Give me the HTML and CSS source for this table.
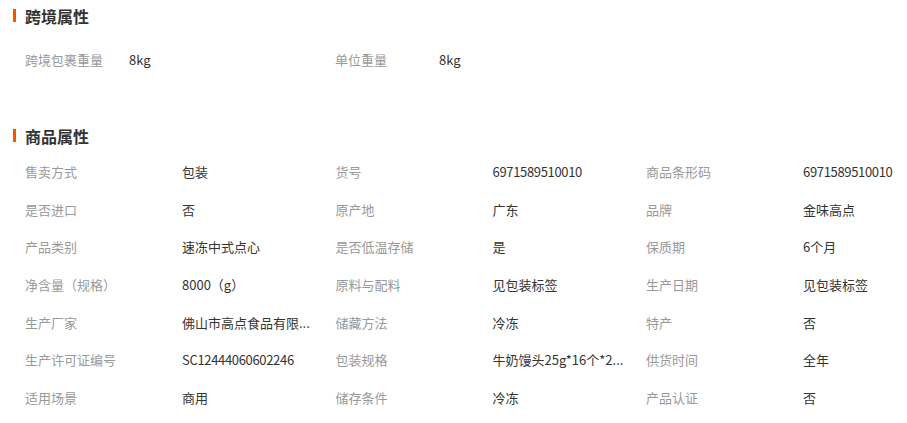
FILE: index.html
```html
<!DOCTYPE html>
<html lang="zh-CN">
<head>
    <meta charset="UTF-8">
    <meta name="viewport" content="width=device-width, initial-scale=1.0">
    <title>商品属性</title>
    <link rel="stylesheet" href="styles.css">
</head>
<body>
    <div class="section">
        <h2 class="section-title">跨境属性</h2>
        <div class="cross-row">
            <div class="cross-item">
                <span class="cross-label">跨境包裹重量</span>
                <span class="value">8kg</span>
            </div>
            <div class="cross-item">
                <span class="cross-label">单位重量</span>
                <span class="value">8kg</span>
            </div>
        </div>
    </div>

    <div class="section section-goods">
        <h2 class="section-title">商品属性</h2>
        <div class="attr-grid">
            <div class="attr"><span class="label">售卖方式</span><span class="value">包装</span></div>
            <div class="attr"><span class="label">货号</span><span class="value num">6971589510010</span></div>
            <div class="attr"><span class="label">商品条形码</span><span class="value num">6971589510010</span></div>

            <div class="attr"><span class="label">是否进口</span><span class="value">否</span></div>
            <div class="attr"><span class="label">原产地</span><span class="value">广东</span></div>
            <div class="attr"><span class="label">品牌</span><span class="value">金味高点</span></div>

            <div class="attr"><span class="label">产品类别</span><span class="value">速冻中式点心</span></div>
            <div class="attr"><span class="label">是否低温存储</span><span class="value">是</span></div>
            <div class="attr"><span class="label">保质期</span><span class="value">6个月</span></div>

            <div class="attr"><span class="label">净含量（规格）</span><span class="value">8000（g）</span></div>
            <div class="attr"><span class="label">原料与配料</span><span class="value">见包装标签</span></div>
            <div class="attr"><span class="label">生产日期</span><span class="value">见包装标签</span></div>

            <div class="attr"><span class="label">生产厂家</span><span class="value" title="佛山市高点食品有限公司">佛山市高点食品有限...</span></div>
            <div class="attr"><span class="label">储藏方法</span><span class="value">冷冻</span></div>
            <div class="attr"><span class="label">特产</span><span class="value">否</span></div>

            <div class="attr"><span class="label">生产许可证编号</span><span class="value num">SC12444060602246</span></div>
            <div class="attr"><span class="label">包装规格</span><span class="value" title="牛奶馒头25g*16个*20包">牛奶馒头25g*16个*2...</span></div>
            <div class="attr"><span class="label">供货时间</span><span class="value">全年</span></div>

            <div class="attr"><span class="label">适用场景</span><span class="value">商用</span></div>
            <div class="attr"><span class="label">储存条件</span><span class="value">冷冻</span></div>
            <div class="attr"><span class="label">产品认证</span><span class="value">否</span></div>
        </div>
    </div>
</body>
</html>
```

FILE: styles.css
```css
body {
    margin: 0;
    font-family: "Noto Sans CJK SC", "Liberation Sans", sans-serif;
    font-size: 13px;
    color: #333;
    background: #fff;
}
.section-title {
    margin: 0;
    height: 32px;
    line-height: 32px;
    padding-left: 25px;
    position: relative;
    font-size: 16px;
    font-weight: bold;
    color: #333;
}
.section-title::before {
    content: "";
    position: absolute;
    left: 13px;
    top: 9px;
    width: 3px;
    height: 13px;
    background-color: #ff5000;
}
.cross-row {
    display: flex;
    margin-top: 9px;
    padding-left: 25px;
}
.cross-item {
    width: 310px;
    height: 38px;
    line-height: 38px;
    display: flex;
}
.cross-label {
    width: 104px;
    color: #999;
}
.section-goods {
    margin-top: 41px;
}
.attr-grid {
    display: grid;
    grid-template-columns: 310.5px 310.5px 1fr;
    grid-auto-rows: 37.67px;
    margin-top: 1px;
    padding-left: 25px;
}
.attr {
    display: flex;
    line-height: 37.67px;
    white-space: nowrap;
}
.label {
    width: 157px;
    flex-shrink: 0;
    color: #999;
}
.value {
    color: #333;
}
.num {
    letter-spacing: -0.33px;
}
```
